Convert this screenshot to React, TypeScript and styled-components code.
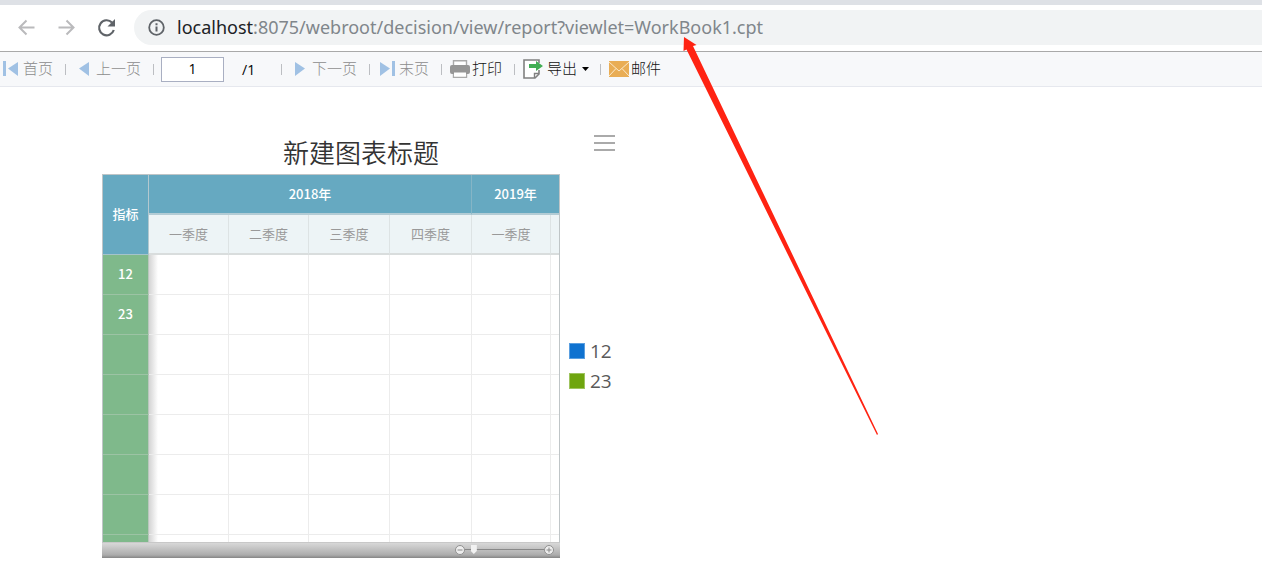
import React, { useState } from "react";
import styled, { createGlobalStyle } from "styled-components";

const GlobalStyle = createGlobalStyle`
  * { box-sizing: border-box; }
  body {
    margin: 0;
    background: #fff;
    font-family: "Open Sans", "Noto Sans CJK SC", sans-serif;
  }
  button { border: 0; padding: 0; background: none; font: inherit; color: inherit; }
`;

const Page = styled.div`
  position: relative;
  min-height: 100vh;
`;

const TabStrip = styled.div`
  height: 5px;
  background: #dee1e6;
`;

const BrowserBar = styled.header`
  display: flex;
  align-items: center;
  height: 47px;
  padding: 5px 0 6px 16px;
  border-bottom: 1px solid #a9a9a9;
`;

const NavButton = styled.button`
  display: flex;
  margin-right: 20px;
`;

const AddressBar = styled.div`
  display: flex;
  flex: 1;
  align-items: center;
  gap: 11px;
  height: 35px;
  margin-left: -2px;
  padding-left: 13px;
  border-radius: 18px 0 0 18px;
  background: #f1f3f4;
`;

const Address = styled.div`
  padding-bottom: 2px;
  color: #80868b;
  font-family: "Noto Sans", sans-serif;
  font-size: 18px;
  line-height: 26px;
  white-space: nowrap;
`;

const Host = styled.span`
  color: #202124;
`;

const Toolbar = styled.nav`
  display: flex;
  align-items: center;
  height: 35px;
  padding-left: 3px;
  border-bottom: 1px solid #e6e8ee;
  background: #f7f8fa;
  font-family: "Noto Sans CJK SC", sans-serif;
  font-size: 15px;
  font-weight: 300;
  line-height: 20px;
`;

const ToolButton = styled.button<{ $gap?: number }>`
  display: flex;
  align-items: center;
  gap: ${(p) => p.$gap ?? 4}px;
  color: #111;
  white-space: nowrap;
  &:disabled { color: #8c8c8c; }
`;

const ToolLabel = styled.span`
  padding-bottom: 2px;
`;

const Divider = styled.span<{ $before?: number; $after?: number }>`
  width: 1px;
  height: 11px;
  margin: 0 ${(p) => p.$after ?? 8}px 0 ${(p) => p.$before ?? 12}px;
  background: #bcbec2;
`;

const PageInput = styled.input`
  width: 63px;
  height: 25px;
  padding: 0 0 2px;
  border: 1px solid #a9afc2;
  background: #fff;
  color: #000;
  font: 400 14px "Open Sans", sans-serif;
  text-align: center;
`;

const PageTotal = styled.span`
  width: 32px;
  margin-left: 18px;
  color: #000;
  font: 400 14px "Open Sans", sans-serif;
`;

const Report = styled.main`
  display: flex;
  align-items: flex-start;
  padding: 48px 0 0 102px;
`;

const Chart = styled.section`
  width: 458px;
`;

const ChartTitle = styled.h1`
  margin: 0;
  padding-left: 60px;
  color: #333;
  font-family: "Noto Sans CJK SC", sans-serif;
  font-size: 26px;
  font-weight: 350;
  line-height: 34px;
  height: 39px;
  text-align: center;
`;

const GridFrame = styled.div`
  height: 369px;
  overflow: hidden;
  border: 1px solid #bfc5c7;
  border-bottom-color: #c8c8c8;
`;

const GanttTable = styled.table`
  width: 100%;
  table-layout: fixed;
  border-collapse: separate;
  border-spacing: 0;
  font-family: "Noto Sans CJK SC", sans-serif;
  font-size: 13px;
  line-height: 18px;
  text-align: center;
`;

const Row = styled.tr`
  height: 40px;
`;

const YearCell = styled.th`
  padding: 0;
  border-right: 1px solid #85b5c6;
  border-bottom: 2px solid #b3ccd5;
  background: #66a9c1;
  color: #fff;
  font-weight: 500;
  &:last-child { border-right: 0; }
`;

const CornerCell = styled(YearCell)`
  padding-bottom: 2px;
  border-right-color: #b3c8cf;
  border-bottom: 1px solid #a5c3ca;
`;

const QuarterCell = styled.th`
  padding: 0;
  border-right: 1px solid #dde3e4;
  border-bottom: 2px solid #d9dddd;
  background: #edf4f6;
  color: #999;
  font-weight: 400;
  &:last-child { border-right: 0; }
`;

const IndexCell = styled.th`
  padding: 0 0 1px;
  border-right: 1px solid #b9c6bd;
  border-bottom: 1px solid #9cc3a4;
  background: #7fb98b;
  color: #fff;
  font-weight: 500;
`;

const PlotCell = styled.td`
  padding: 0;
  border-right: 1px solid #ececec;
  border-bottom: 1px solid #ececec;
  &:nth-child(2) { background: linear-gradient(90deg, #d4d4d4, #fff 9px); }
  &:last-child { border-right: 0; }
`;

const ZoomBar = styled.div`
  display: flex;
  align-items: center;
  justify-content: flex-end;
  height: 15px;
  padding: 0 6px 2px 0;
  background: linear-gradient(#d8d8d8, #acacac 80%, #858585);
`;

const ZoomButton = styled.button`
  display: flex;
`;

const ZoomRange = styled.input`
  appearance: none;
  width: 79px;
  height: 9px;
  margin: 0;
  background: linear-gradient(#888, #888) center / 100% 1px no-repeat;
  &::-webkit-slider-thumb {
    appearance: none;
    width: 6px;
    height: 9px;
    background: #f2f2f2;
    clip-path: polygon(0 0, 100% 0, 100% 66%, 50% 100%, 0 66%);
  }
`;

const Side = styled.aside`
  display: flex;
  flex-direction: column;
  gap: 185px;
  padding-left: 9px;
`;

const MenuButton = styled.button`
  display: flex;
  margin-left: 25px;
`;

const Legend = styled.ul`
  margin: 0;
  padding: 0;
  list-style: none;
`;

const LegendItem = styled.li`
  display: flex;
  align-items: center;
  gap: 5px;
  height: 30px;
  color: #595959;
  font-size: 19px;
  line-height: 30px;
`;

const Swatch = styled.span<{ $color: string; $edge: string }>`
  width: 16px;
  height: 16px;
  border: 1px solid ${(p) => p.$edge};
  background: ${(p) => p.$color};
`;

const Pointer = styled.svg`
  position: absolute;
  top: 36px;
  left: 680px;
  pointer-events: none;
`;

const columnWidths = [46, 80, 80, 81, 82, 79, 8];
const quarters = ["一季度", "二季度", "三季度", "四季度", "一季度", ""];
const indexes = ["12", "23", "", "", "", "", "", ""];

const Triangle = ({ back, bar }: { back?: boolean; bar?: boolean }) => (
  <svg width={bar ? 16 : 12} height="16" viewBox={bar ? "0 0 16 16" : "4 0 12 16"} aria-hidden="true">
    <g fill="#a0c1e4" transform={back ? undefined : bar ? "translate(16 0) scale(-1 1)" : "translate(20 0) scale(-1 1)"}>
      {bar && <rect x="0" y="0" width="3" height="15" />}
      <path d="M5 7.500 15 1v14z" />
    </g>
  </svg>
);

export default function App() {
  const [page, setPage] = useState("1");
  const [zoom, setZoom] = useState(8);

  return (
    <Page>
      <GlobalStyle />
      <TabStrip />
      <BrowserBar>
        <NavButton aria-label="后退">
          <svg width="20" height="20" fill="none" stroke="#bababc" strokeWidth="2">
            <path d="M18.500 9.500H4M10.500 2.500l-7 7 7 7" />
          </svg>
        </NavButton>
        <NavButton aria-label="前进">
          <svg width="20" height="20" fill="none" stroke="#bababc" strokeWidth="2">
            <path d="M2.500 9.500H17M10.500 2.500l7 7-7 7" />
          </svg>
        </NavButton>
        <NavButton aria-label="刷新">
          <svg width="20" height="20">
            <path d="M16 4.500A7.500 7.500 0 1 0 17.800 12" fill="none" stroke="#5f6368" strokeWidth="2.200" />
            <path d="M19 1v7.500h-7.500z" fill="#5f6368" />
          </svg>
        </NavButton>
        <AddressBar>
          <svg width="19" height="19" viewBox="0 0 19 19" aria-hidden="true">
            <circle cx="9.500" cy="9.500" r="7.300" fill="none" stroke="#5f6368" strokeWidth="1.800" />
            <path d="M8.500 8.500h2v5h-2zM8.500 5.200h2v2h-2z" fill="#5f6368" />
          </svg>
          <Address>
            <Host>localhost</Host>:8075/webroot/decision/view/report?viewlet=WorkBook1.cpt
          </Address>
        </AddressBar>
      </BrowserBar>

      <Toolbar>
        <ToolButton disabled><Triangle back bar /><ToolLabel>首页</ToolLabel></ToolButton>
        <Divider $after={12} />
        <ToolButton disabled $gap={6}><Triangle back /><ToolLabel>上一页</ToolLabel></ToolButton>
        <Divider $after={7} />
        <PageInput aria-label="页码" value={page} onChange={(e) => setPage(e.target.value)} />
        <PageTotal>/1</PageTotal>
        <Divider $before={7} $after={12} />
        <ToolButton disabled $gap={6}><Triangle /><ToolLabel>下一页</ToolLabel></ToolButton>
        <Divider $after={9} />
        <ToolButton disabled><Triangle bar /><ToolLabel>末页</ToolLabel></ToolButton>
        <Divider />
        <ToolButton $gap={2}>
          <svg width="20" height="18" viewBox="0 0 20 18" aria-hidden="true">
            <path d="M3.500 6V.800h13V6M3.500 12v5.200h13V12" fill="#fff" stroke="#aaa" strokeWidth="1.400" />
            <rect x="0" y="5" width="20" height="9" rx="2" fill="#969696" />
            <path d="M4 12.500h12v4H4z" fill="#fff" />
          </svg>
          <ToolLabel>打印</ToolLabel>
        </ToolButton>
        <Divider $after={8} />
        <ToolButton>
          <svg width="20" height="20" viewBox="0 0 20 20" aria-hidden="true">
            <path d="M16 11v4l-4 4H1V1h15v3" fill="#fff" stroke="#808080" strokeWidth="1.600" />
            <path d="M11.500 19v-4.500H16" fill="none" stroke="#808080" strokeWidth="1.400" />
            <path d="M6 5h7V2l7 5-7 5V9H6z" fill="#41ae54" />
          </svg>
          <ToolLabel>导出</ToolLabel>
          <svg width="8" height="5" aria-hidden="true"><path d="M1 0h7L4.500 4z" fill="#000" /></svg>
        </ToolButton>
        <Divider $before={11} />
        <ToolButton $gap={2}>
          <svg width="20" height="16" viewBox="0 0 20 16" aria-hidden="true">
            <rect width="20" height="16" fill="#e9ad55" />
            <path d="M0 1l10 9L20 1M0 15l7-7.500M20 15l-7-7.500" fill="none" stroke="#fbe9ca" />
          </svg>
          <ToolLabel>邮件</ToolLabel>
        </ToolButton>
      </Toolbar>

      <Report>
        <Chart>
          <ChartTitle>新建图表标题</ChartTitle>
          <GridFrame>
            <GanttTable>
              <colgroup>
                {columnWidths.map((width, i) => <col key={i} width={width} />)}
              </colgroup>
              <thead>
                <Row>
                  <CornerCell rowSpan={2}>指标</CornerCell>
                  <YearCell colSpan={4}>2018年</YearCell>
                  <YearCell colSpan={2}>2019年</YearCell>
                </Row>
                <Row>
                  {quarters.map((name, i) => <QuarterCell key={i}>{name}</QuarterCell>)}
                </Row>
              </thead>
              <tbody>
                {indexes.map((name, i) => (
                  <Row key={i}>
                    <IndexCell>{name}</IndexCell>
                    {quarters.map((_, j) => <PlotCell key={j} />)}
                  </Row>
                ))}
              </tbody>
            </GanttTable>
          </GridFrame>
          <ZoomBar>
            <ZoomButton aria-label="缩小">
              <svg width="10" height="10"><circle cx="5" cy="5" r="4.500" fill="#eee" stroke="#909090" /><path d="M2.500 5h5" stroke="#888" /></svg>
            </ZoomButton>
            <ZoomRange type="range" aria-label="缩放" value={zoom} onChange={(e) => setZoom(Number(e.target.value))} />
            <ZoomButton aria-label="放大">
              <svg width="10" height="10"><circle cx="5" cy="5" r="4.500" fill="#eee" stroke="#909090" /><path d="M2.500 5h5M5 2.500v5" stroke="#888" /></svg>
            </ZoomButton>
          </ZoomBar>
        </Chart>
        <Side>
          <MenuButton aria-label="菜单">
            <svg width="21" height="16"><path d="M0 1h21M0 8h21M0 15h21" stroke="#aaa" strokeWidth="2" /></svg>
          </MenuButton>
          <Legend>
            <LegendItem><Swatch $color="#0f72d0" $edge="#5b9fe0" />12</LegendItem>
            <LegendItem><Swatch $color="#6fa50f" $edge="#9fc45f" />23</LegendItem>
          </Legend>
        </Side>
      </Report>

      <Pointer width="200" height="400" aria-hidden="true">
        <path d="M4 1 16.500 9 13 10 198 398 197 399 6.500 13.500 3.500 15z" fill="#ff2312" />
      </Pointer>
    </Page>
  );
}
